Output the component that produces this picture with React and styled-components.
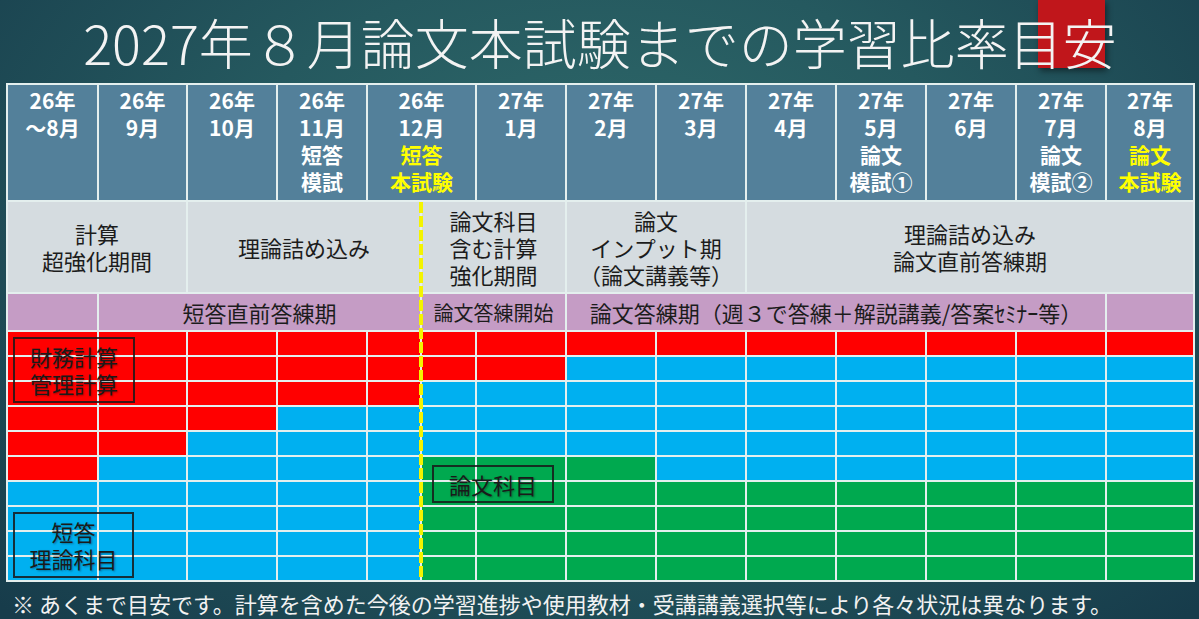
import React from 'react';
import styled, { createGlobalStyle } from 'styled-components';

const GlobalStyle = createGlobalStyle`
    html, body {
        margin: 0;
        padding: 0;
    }
    body {
        font-family: "Noto Sans CJK JP", "Noto Sans", sans-serif;
        background: #1b4652;
    }
`;

// column widths of the schedule grid (12月 is split in two by the exam line)
const COLS = [89, 87, 88, 88, 52, 53, 88, 88, 88, 88, 88, 88, 88, 86];

// red / blue block counts per column, top to bottom; the rest is green
const FILLS = [
    [6, 4], [5, 5], [4, 6], [3, 7], [3, 7], [2, 3], [2, 3], [1, 4],
    [1, 5], [1, 5], [1, 5], [1, 5], [1, 5], [1, 5],
];

const TONES = {
    red: '#ff0000',
    blue: '#00b0f0',
    green: '#00a94f',
};

const MONTHS = [
    { span: 1, lines: ['26年', '～8月'] },
    { span: 1, lines: ['26年', '9月'] },
    { span: 1, lines: ['26年', '10月'] },
    { span: 1, lines: ['26年', '11月', '短答', '模試'] },
    { span: 2, lines: ['26年', '12月'], hi: ['短答', '本試験'] },
    { span: 1, lines: ['27年', '1月'] },
    { span: 1, lines: ['27年', '2月'] },
    { span: 1, lines: ['27年', '3月'] },
    { span: 1, lines: ['27年', '4月'] },
    { span: 1, lines: ['27年', '5月', '論文', '模試①'] },
    { span: 1, lines: ['27年', '6月'] },
    { span: 1, lines: ['27年', '7月', '論文', '模試②'] },
    { span: 1, lines: ['27年', '8月'], hi: ['論文', '本試験'] },
];

const PHASES = [
    { span: 2, lines: ['計算', '超強化期間'] },
    { span: 3, lines: ['理論詰め込み'] },
    { span: 2, lines: ['論文科目', '含む計算', '強化期間'] },
    { span: 2, lines: ['論文', 'インプット期', '（論文講義等）'] },
    { span: 5, lines: ['理論詰め込み', '論文直前答練期'] },
];

const DRILLS = [
    { span: 1, text: '' },
    { span: 4, text: '短答直前答練期' },
    { span: 2, text: '論文答練開始', small: true },
    { span: 6, text: '論文答練期（週３で答練＋解説講義/答案ｾﾐﾅｰ等）' },
    { span: 1, text: '' },
];

const Page = styled.div`
    position: relative;
    width: 1199px;
    height: 619px;
    overflow: hidden;
    box-sizing: border-box;
    padding: 0 6px;
    display: flex;
    flex-direction: column;
    background: radial-gradient(ellipse 70% 90% at 50% 35%, #2f6a6b 0%, #25595f 45%, #173c4b 100%);
`;

const TitleBar = styled.header`
    height: 83px;
    display: flex;
    align-items: center;
    justify-content: center;
`;

const Title = styled.h1`
    position: relative;
    z-index: 1;
    margin: 0 0 0 1px;
    font-size: 54px;
    font-weight: 300;
    line-height: 1;
    color: #f3f3f3;
    white-space: nowrap;
`;

const Accent = styled.div`
    position: absolute;
    left: 1038px;
    top: 0;
    width: 67px;
    height: 68px;
    background: #c0161b;
    box-shadow: 2px 3px 6px rgba(0, 0, 0, 0.45);
`;

const Table = styled.div`
    position: relative;
    display: grid;
    grid-template-columns: ${COLS.map((c) => `${c}px`).join(' ')};
    grid-template-rows: 115px 90px 36px repeat(10, 23px);
    gap: 2px;
    padding: 2px;
    width: max-content;
    background: #e4efee;
`;

const HeadCell = styled.div`
    grid-column: span ${(p) => p.$span};
    padding-top: 2px;
    background: #53809a;
    text-align: center;
    font-size: 21px;
    font-weight: 700;
    line-height: 27px;
`;

const HeadLine = styled.div`
    color: ${(p) => (p.$hi ? '#ffff00' : '#ffffff')};
`;

const PhaseCell = styled.div`
    grid-column: span ${(p) => p.$span};
    display: flex;
    flex-direction: column;
    align-items: center;
    justify-content: center;
    background: #d5dce0;
    color: #1c1c1c;
    font-size: 22px;
    line-height: 27px;
    white-space: nowrap;
`;

const DrillCell = styled.div`
    grid-column: span ${(p) => p.$span};
    display: flex;
    align-items: center;
    justify-content: center;
    background: #c59cc5;
    color: #1c1c1c;
    font-size: ${(p) => (p.$small ? 20 : 22)}px;
    white-space: nowrap;
`;

const Block = styled.div`
    background: ${(p) => TONES[p.$tone]};
`;

const ExamLine = styled.div`
    position: absolute;
    left: 413px;
    top: 119px;
    bottom: 2px;
    width: 4px;
    background: repeating-linear-gradient(
        to bottom,
        #f4f400 0,
        #f4f400 11px,
        transparent 11px,
        transparent 14px
    );
`;

const Label = styled.div`
    position: absolute;
    left: ${(p) => p.$x}px;
    top: ${(p) => p.$y}px;
    width: ${(p) => p.$w}px;
    height: ${(p) => p.$h}px;
    box-sizing: border-box;
    display: flex;
    flex-direction: column;
    align-items: center;
    justify-content: center;
    border: 2px solid rgba(25, 25, 25, 0.85);
    color: #1a1a1a;
    font-size: 22px;
    line-height: 27px;
    text-shadow: 1px 1px 2px rgba(0, 0, 0, 0.35);
    white-space: nowrap;
`;

const Footer = styled.p`
    flex: 1;
    display: flex;
    align-items: center;
    margin: 0;
    padding: 4px 0 0 6px;
    color: #f2f2f2;
    font-size: 22px;
    white-space: nowrap;
`;

const toneAt = (col, row) => {
    const [red, blue] = FILLS[col];
    if (row < red) return 'red';
    if (row < red + blue) return 'blue';
    return 'green';
};

const App = () => {
    const blocks = [];
    for (let r = 0; r < 10; r += 1) {
        for (let c = 0; c < COLS.length; c += 1) {
            blocks.push(<Block key={`${r}-${c}`} $tone={toneAt(c, r)} />);
        }
    }

    return (
        <>
            <GlobalStyle />
            <Page>
                <Accent />
                <TitleBar>
                    <Title>2027年８月論文本試験までの学習比率目安</Title>
                </TitleBar>

                <Table>
                    {MONTHS.map((m, i) => (
                        <HeadCell key={`m${i}`} $span={m.span}>
                            {m.lines.map((l) => (
                                <HeadLine key={l}>{l}</HeadLine>
                            ))}
                            {m.hi &&
                                m.hi.map((l) => (
                                    <HeadLine key={l} $hi>
                                        {l}
                                    </HeadLine>
                                ))}
                        </HeadCell>
                    ))}

                    {PHASES.map((p, i) => (
                        <PhaseCell key={`p${i}`} $span={p.span}>
                            {p.lines.map((l) => (
                                <div key={l}>{l}</div>
                            ))}
                        </PhaseCell>
                    ))}

                    {DRILLS.map((d, i) => (
                        <DrillCell key={`d${i}`} $span={d.span} $small={d.small}>
                            {d.text}
                        </DrillCell>
                    ))}

                    {blocks}

                    <ExamLine />
                    <Label $x={7} $y={254} $w={122} $h={66}>
                        <div>財務計算</div>
                        <div>管理計算</div>
                    </Label>
                    <Label $x={426} $y={382} $w={122} $h={38}>
                        <div>論文科目</div>
                    </Label>
                    <Label $x={7} $y={429} $w={121} $h={66}>
                        <div>短答</div>
                        <div>理論科目</div>
                    </Label>
                </Table>

                <Footer>※ あくまで目安です。計算を含めた今後の学習進捗や使用教材・受講講義選択等により各々状況は異なります。</Footer>
            </Page>
        </>
    );
};

export default App;
